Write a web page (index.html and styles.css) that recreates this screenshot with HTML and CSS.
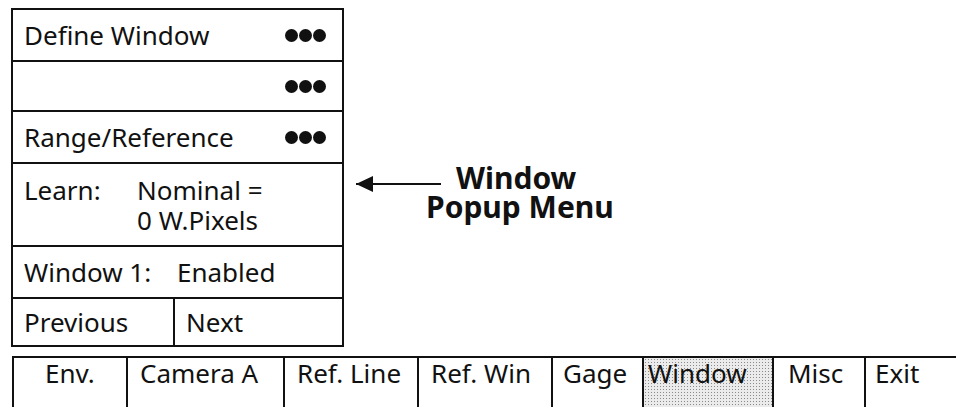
FILE: index.html
```
<!DOCTYPE html>
<html lang="en">
<head>
    <meta charset="UTF-8">
    <meta name="viewport" content="width=device-width, initial-scale=1.0">
    <title>Window Popup Menu</title>
    <link rel="stylesheet" href="styles.css">
</head>
<body>
    <div class="top">
        <div class="menu">
            <div class="row r1"><span>Define Window</span><span class="dots"><i></i><i></i><i></i></span></div>
            <div class="row r2"><span></span><span class="dots"><i></i><i></i><i></i></span></div>
            <div class="row r3"><span>Range/Reference</span><span class="dots"><i></i><i></i><i></i></span></div>
            <div class="row learn">
                <div class="pair"><span class="lbl">Learn:</span><span>Nominal =</span></div>
                <div class="pair"><span class="lbl"></span><span>0 W.Pixels</span></div>
            </div>
            <div class="row r5"><span class="lbl wide">Window 1:</span><span>Enabled</span></div>
            <div class="row split">
                <div class="half">Previous</div>
                <div class="half">Next</div>
            </div>
        </div>
        <div class="callout">
            <div class="line1">
                <div class="arrow"></div>
                <div class="label">Window</div>
            </div>
            <div class="label second">Popup Menu</div>
        </div>
    </div>

    <div class="bar">
        <div class="cell env">Env.</div>
        <div class="cell cam">Camera A</div>
        <div class="cell line">Ref. Line</div>
        <div class="cell win">Ref. Win</div>
        <div class="cell gage">Gage</div>
        <div class="cell active">Window</div>
        <div class="cell misc">Misc</div>
        <div class="cell exit">Exit</div>
    </div>
</body>
</html>
```
FILE: styles.css
```
body {
    margin: 0;
    width: 956px;
    height: 407px;
    overflow: hidden;
    background-color: #fff;
    color: #111;
    font-family: "Noto Sans", "Open Sans", sans-serif;
    font-size: 26px;
}
.top {
    display: flex;
    padding: 8px 0 0 11px;
}
.menu {
    width: 333px;
    box-sizing: border-box;
    border: 2px solid #111;
}
.row {
    display: flex;
    align-items: center;
    justify-content: space-between;
    padding: 0 16px 0 11px;
    border-bottom: 2px solid #111;
    line-height: 30px;
}
.r1 { height: 50px; }
.r2 { height: 48px; }
.r3 { height: 50px; }
.r5 { height: 50px; justify-content: flex-start; }
.dots {
    display: flex;
    gap: 1px;
}
.dots i {
    width: 13px;
    height: 13px;
    border-radius: 50%;
    background-color: #111;
}
.learn {
    height: 81px;
    flex-direction: column;
    align-items: flex-start;
    justify-content: center;
}
.pair {
    display: flex;
}
.lbl {
    width: 113px;
}
.lbl.wide {
    width: 153px;
}
.split {
    height: 46px;
    padding: 0;
    border-bottom: none;
}
.half {
    width: 160px;
    height: 100%;
    display: flex;
    align-items: center;
    padding-left: 11px;
    box-sizing: border-box;
}
.half + .half {
    flex: 1;
    border-left: 2px solid #111;
}
.callout {
    padding: 155px 0 0 12px;
}
.line1 {
    display: flex;
    align-items: flex-start;
}
.arrow {
    position: relative;
    width: 85px;
    height: 2px;
    margin-top: 20px;
    background-color: #111;
}
.arrow::before {
    content: "";
    position: absolute;
    left: 0;
    top: -7px;
    border-right: 17px solid #111;
    border-top: 8px solid transparent;
    border-bottom: 8px solid transparent;
}
.label {
    font-weight: bold;
    font-size: 30px;
    line-height: 29px;
    margin-left: 15px;
}
.label.second {
    margin-left: 70px;
}
.bar {
    display: flex;
    margin: 9px 0 0 12px;
    border-top: 2px solid #111;
    border-left: 2px solid #111;
    height: 60px;
}
.cell {
    flex: none;
    padding: 2px 0 0 12px;
    line-height: 26px;
    box-sizing: border-box;
    border-right: 2px solid #111;
    white-space: nowrap;
}
.env { width: 114px; padding-left: 31px; }
.cam { width: 157px; }
.line { width: 134px; }
.win { width: 134px; }
.gage { width: 91px; padding-left: 10px; }
.active {
    width: 130px;
    padding-left: 4px;
    background-color: #ebebeb;
    background-image: radial-gradient(#8a8a8a 0.7px, transparent 0.9px);
    background-size: 3px 3px;
}
.misc { width: 92px; padding-left: 14px; }
.exit { width: 120px; border-right: none; padding-left: 9px; }
```
